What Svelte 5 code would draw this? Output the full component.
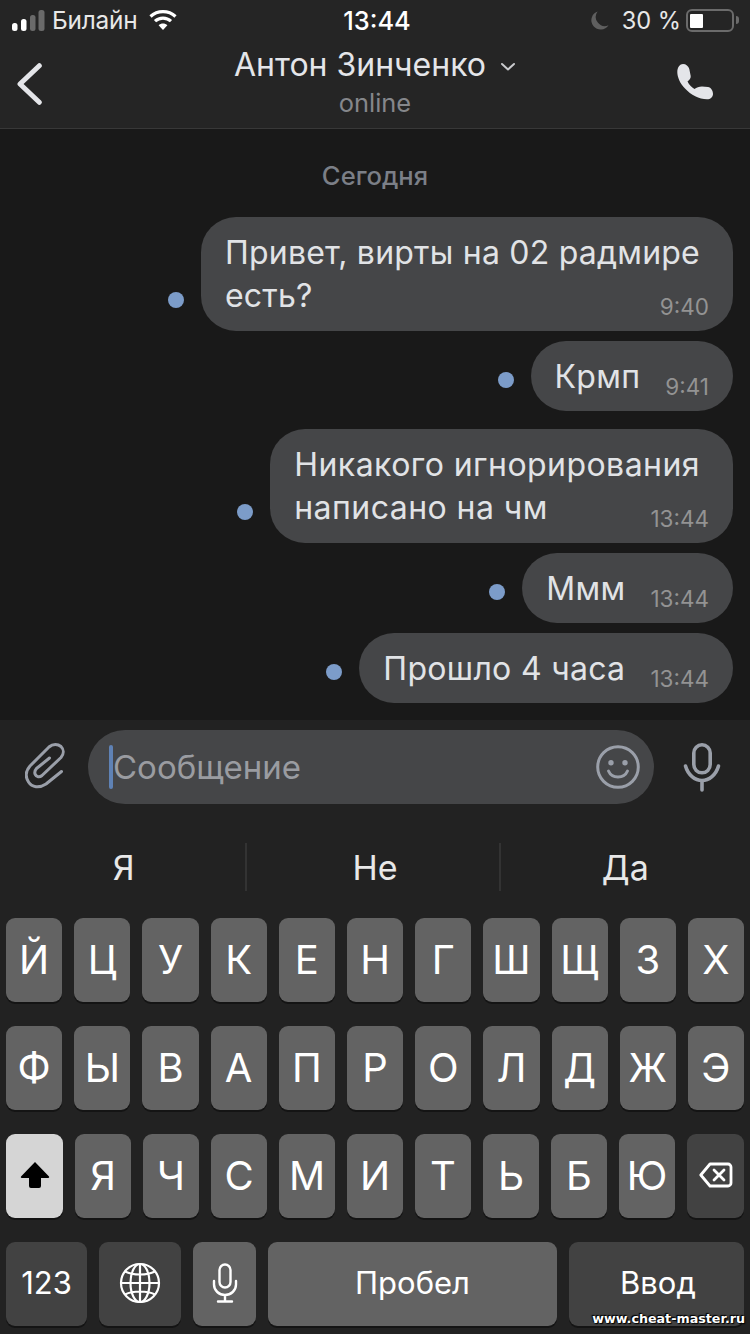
<script>
  const msgs = [
    { lines: ['Привет, вирты на 02 радмире', 'есть?'], time: '9:40' },
    { lines: ['Крмп'], time: '9:41' },
    { lines: ['Никакого игнорирования', 'написано на чм'], time: '13:44' },
    { lines: ['Ммм'], time: '13:44' },
    { lines: ['Прошло 4 часа'], time: '13:44' }
  ];
  const rows = [
    ['Й','Ц','У','К','Е','Н','Г','Ш','Щ','З','Х'],
    ['Ф','Ы','В','А','П','Р','О','Л','Д','Ж','Э']
  ];
  const row3 = ['Я','Ч','С','М','И','Т','Ь','Б','Ю'];
</script>

<div class="screen">
  <header class="top">
    <div class="status">
      <div class="st-left">
        <svg class="signal" width="33" height="21" viewBox="0 0 33 21">
          <rect x="0" y="13" width="5.500" height="8" rx="2.500" fill="#fff"/>
          <rect x="9" y="9" width="5.500" height="12" rx="2.500" fill="#fff"/>
          <rect x="18" y="5" width="5.500" height="16" rx="2.500" fill="#6a6a6a"/>
          <rect x="26.500" y="0" width="6" height="21" rx="2.500" fill="#6a6a6a"/>
        </svg>
        <span class="carrier">Билайн</span>
        <svg class="wifi" width="28" height="22" viewBox="0 0 28 22" fill="none" stroke="#fff" stroke-width="3.2">
          <path d="M1.5 7.5C8.5 1 19.5 1 26.5 7.5"/>
          <path d="M6 12.2C10.5 8 17.5 8 22 12.2"/>
          <path d="M14 21L9.6 16.2C12 14 16 14 18.4 16.2Z" fill="#fff" stroke="none"/>
        </svg>
      </div>
      <span class="clock">13:44</span>
      <div class="st-right">
        <svg class="moon" width="19" height="19" viewBox="0 0 20 20"><path d="M8 .5A9.6 9.6 0 0 0 19.500 15 9.800 9.800 0 1 1 8 .5Z" fill="#5f5f5f"/></svg>
        <span class="pct">30 %</span>
        <div class="battery"><i></i></div>
        <span class="nub"></span>
      </div>
    </div>
    <div class="nav">
      <svg class="back" width="26" height="44" viewBox="0 0 26 44" fill="none" stroke="#e4e5e9" stroke-width="5" stroke-linecap="round" stroke-linejoin="round">
        <path d="M22.300 3.700 3 22 22.300 40.300"/>
      </svg>
      <div class="title">
        <div class="name">Антон Зинченко
          <svg class="chev" width="16" height="10" viewBox="0 0 16 10" fill="none" stroke="#c9cacd" stroke-width="2" stroke-linecap="round" stroke-linejoin="round"><path d="M2 2l6 5.4L14 2"/></svg>
        </div>
        <div class="online">online</div>
      </div>
      <svg class="phone" width="36" height="36" viewBox="0 0 36 36">
        <path d="M.3 8C.3 3 3 0 6 0 9 0 11.500 2 12.300 5L13.700 12C14 14 12.500 16 10.500 17.500 12 20.500 14.500 23.500 17.500 25 19.500 23.500 22 22.500 25 22.500L31 23C34 23.500 36 26.500 36 30 36 33 33.500 35.300 30 35.300 22 35.300 14 31 8 24.500 3 19.500 .3 13 .3 8Z" fill="#e4e5e9"/>
      </svg>
    </div>
  </header>

  <main class="chat">
    <div class="date">Сегодня</div>
    <div class="list">
      {#each msgs as m}
        <div class="row" class:multi={m.lines.length > 1}>
          <span class="dot"></span>
          <div class="bubble">
            <div class="text">
              {#each m.lines as l}<div>{l}</div>{/each}
            </div>
            <span class="time">{m.time}</span>
          </div>
        </div>
      {/each}
    </div>
  </main>

  <section class="composer">
    <svg class="clip" width="40" height="46" viewBox="0 0 40 46" fill="none" stroke="#9a9fa9" stroke-width="3" stroke-linecap="round" stroke-linejoin="round">
      <path d="M36.500 28.500 21 41C14 45.500 7 44.500 3.500 39 0 33.500 1 27.500 5 23L24 4C28 .5 33 1 36 3.500 39 6.500 39 11 36 14.500L17 32.500C14.500 34.500 11.500 34 10.300 31.500 9.300 29.500 9.800 27.500 11.500 25.500L24.500 15"/>
    </svg>
    <div class="field">
      <span class="caret"></span>
      <span class="placeholder">Сообщение</span>
      <svg class="smile" width="44" height="44" viewBox="0 0 44 44" fill="none" stroke="#9a9fa9" stroke-width="3">
        <circle cx="22" cy="22" r="20.300"/>
        <circle cx="15" cy="17.700" r="2.700" fill="#9a9fa9" stroke="none"/>
        <circle cx="29" cy="17.700" r="2.700" fill="#9a9fa9" stroke="none"/>
        <path d="M12.500 26C16 34 28 34 31.500 26" stroke-linecap="round"/>
      </svg>
    </div>
    <svg class="mic" width="38" height="50" viewBox="0 0 38 50" fill="none" stroke="#9a9fa9" stroke-width="3.600" stroke-linecap="round">
      <rect x="10.800" y="2.800" width="16.400" height="28" rx="8.200"/>
      <path d="M2.500 24C5 33 12 38.500 19 38.500S33 33 35.500 24"/>
      <path d="M19 39v9"/>
    </svg>
  </section>

  <section class="suggest">
    <span class="sg">Я</span><span class="sep"></span>
    <span class="sg">Не</span><span class="sep"></span>
    <span class="sg">Да</span>
  </section>

  <section class="kb">
    {#each rows as r}
      <div class="kbrow">{#each r as k}<div class="key">{k}</div>{/each}</div>
    {/each}
    <div class="kbrow">
      <div class="key light">
        <svg width="30" height="28" viewBox="0 0 30 28"><path d="M15 1 29 15.500c.4.600.2 1.500-.8 1.500H21v8a2 2 0 0 1-2 2h-8a2 2 0 0 1-2-2v-8H1.800c-1 0-1.200-.9-.8-1.500Z" fill="#000"/></svg>
      </div>
      {#each row3 as k}<div class="key">{k}</div>{/each}
      <div class="key dark">
        <svg width="34" height="26" viewBox="0 0 34 26" fill="none" stroke="#fff" stroke-width="2.800" stroke-linejoin="round" stroke-linecap="round">
          <path d="M11 2h18a3 3 0 0 1 3 3v16a3 3 0 0 1-3 3H11L1.800 13Z"/>
          <path d="m15 8 10 10M25 8 15 18"/>
        </svg>
      </div>
    </div>
    <div class="kbrow low">
      <div class="key dark k123">123</div>
      <div class="key dark kglobe">
        <svg width="42" height="42" viewBox="0 0 42 42" fill="none" stroke="#fff" stroke-width="2.200">
          <circle cx="21" cy="21" r="19"/>
          <ellipse cx="21" cy="21" rx="9.500" ry="19"/>
          <path d="M21 2v38M2 21h38M6 9.500c8 4 22 4 30 0M6 32.500c8-4 22-4 30 0"/>
        </svg>
      </div>
      <div class="key kmic">
        <svg width="26" height="40" viewBox="0 0 26 40" fill="none" stroke="#fff" stroke-width="2.400" stroke-linecap="round">
          <rect x="7.500" y="1.500" width="11" height="23" rx="5.500"/>
          <path d="M2 18v3.500C2 27.500 7 32 13 32s11-4.500 11-10.500V18M13 32v6.500M6 38.500h14"/>
        </svg>
      </div>
      <div class="key kspace">Пробел</div>
      <div class="key dark kenter">Ввод</div>
    </div>
  </section>
  <div class="wm">www.cheat-master.ru</div>
</div>

<style>
  :global(body) { margin: 0; background: #222; }
  .screen {
    position: relative;
    width: 750px;
    height: 1334px;
    overflow: hidden;
    background: #222;
    font-family: Inter, "Liberation Sans", sans-serif;
    color: #e4e5e9;
  }
  .top { height: 128px; background: #252525; border-bottom: 1px solid #383838; }
  .status {
    height: 40px;
    display: grid;
    grid-template-columns: 1fr auto 1fr;
    align-items: center;
    color: #e8e8e8;
    font-size: 24.4px;
  }
  .st-left { display: flex; align-items: center; padding-left: 12px; }
  .signal { margin-right: 7px; }
  .wifi { margin-left: 11px; }
  .carrier { letter-spacing: -0.2px; }
  .clock { font-weight: 500; color: #fff; font-size: 25.400px; margin-left: 4px; }
  .st-right { display: flex; align-items: center; justify-content: flex-end; padding-right: 11px; }
  .moon { margin-right: 13px; margin-left: -1px; }
  .pct { margin-right: 5px; font-size: 23.600px; }
  .battery {
    width: 40px; height: 14px;
    border: 2px solid #6b6b6b;
    border-radius: 6px;
    padding: 2.500px 2px;
    margin-top: 1px;
  }
  .battery i { display: block; width: 13px; height: 100%; background: #fff; border-radius: 1px; }
  .nub { width: 3px; height: 8px; background: #6b6b6b; margin-left: 2px; border-radius: 0 3px 3px 0; }
  .nav {
    height: 88px;
    display: grid;
    grid-template-columns: 1fr auto 1fr;
    align-items: center;
  }
  .back { margin-left: 17px; }
  .title { text-align: center; margin-top: -6px; }
  .name { font-size: 32px; line-height: 44px; color: #e4e5e9; white-space: nowrap; position: relative; }
  .chev { margin-left: 5px; vertical-align: 4px; }
  .online { font-size: 25.4px; line-height: 32px; color: #85878b; }
  .phone { justify-self: end; margin-right: 37px; margin-top: -4px; }

  .chat { height: 591px; background: #191919; box-sizing: border-box; padding-top: 32px; }
  .date { text-align: center; font-size: 25.6px; line-height: 30px; color: #7b7f87; font-weight: 500; }
  .list { display: flex; flex-direction: column; align-items: flex-end; padding: 26px 17px 0 0; }
  .row { display: flex; align-items: flex-end; gap: 17px; margin-bottom: 10px; }
  .row:nth-child(2) { margin-bottom: 18px; }
  .dot { width: 16px; height: 16px; border-radius: 50%; background: #7c9cc9; margin-bottom: 23px; }
  .bubble {
    position: relative;
    display: flex;
    align-items: flex-end;
    background: #454648;
    border-radius: 35px;
    padding: 14px 24px 13px;
    gap: 25px;
  }
  .row.multi .bubble { padding: 14px 33px 14px 24px; gap: 0; }
  .text { font-size: 32px; line-height: 43px; letter-spacing: 0.3px; color: #e1e3e6; white-space: nowrap; }
  .row:nth-child(1) .text { letter-spacing: 0.22px; }
  .row:nth-child(3) .text { letter-spacing: 0.45px; }
  .time { font-size: 22.500px; line-height: 24px; color: #939393; margin-bottom: -1px; }
  .row.multi .time { position: absolute; right: 24px; bottom: 12px; margin: 0; }

  .composer {
    height: 94px;
    background: #222;
    display: flex;
    align-items: center;
    padding-left: 25px;
    box-sizing: border-box;
  }
  .clip { margin-right: 23px; margin-top: -2px; }
  .field {
    width: 566px; height: 74px;
    border-radius: 37px;
    background: #454648;
    display: flex;
    align-items: center;
    box-sizing: border-box;
    padding-left: 21px;
  }
  .caret { width: 4px; height: 44px; border-radius: 2px; background: #5f82b5; }
  .placeholder { font-size: 33px; color: #9a9ca1; flex: 1; }
  .smile { margin-right: 14px; }
  .mic { margin-left: 29px; }

  .suggest {
    height: 104px;
    box-sizing: border-box;
    padding-top: 2px;
    display: flex;
    align-items: center;
    color: #e8e8e8;
    font-size: 34px;
  }
  .sg { text-align: center; box-sizing: border-box; }
  .sg:nth-of-type(1) { width: 246px; padding-left: 2px; }
  .sg:nth-of-type(3) { width: 252px; padding-left: 4px; }
  .sg:nth-of-type(5) { width: 250px; }
  .sep { width: 2px; height: 48px; background: #333; }

  .kb { display: flex; flex-direction: column; gap: 24px; padding: 0 6px; }
  .kbrow { display: flex; gap: 12px; height: 84px; }
  .key {
    flex: 1 1 0;
    min-width: 0;
    box-sizing: border-box;
    padding-bottom: 2px;
    display: flex; align-items: center; justify-content: center;
    background: #636363;
    border-radius: 9px;
    box-shadow: 0 2px 0 #141414;
    color: #fff;
    font-size: 40px;
  }
  .kbrow.low .key { padding-bottom: 3px; }
  .key.light { background: #d5d5d5; flex: 0 0 57px; }
  .key.dark { background: #424242; }
  .kbrow .dark:last-child { flex: 0 0 57px; }
  .key.k123 { flex: 0 0 81px; font-size: 31px; }
  .key.kglobe { flex: 0 0 82px; }
  .key.kmic { flex: 0 0 63px; }
  .key.kspace { flex: 0 0 289px; font-size: 31px; }
  .kbrow .key.kenter { flex: 0 0 175px; font-size: 31px; padding-left: 3px; }

  .wm {
    position: absolute;
    right: 5px;
    bottom: 8px;
    font-family: "DejaVu Sans", sans-serif;
    font-weight: 700;
    font-size: 12.700px;
    color: #fff;
    text-shadow: 0 0 2px #000, 1px 1px 1px #000, -1px -1px 1px #000;
  }
</style>
